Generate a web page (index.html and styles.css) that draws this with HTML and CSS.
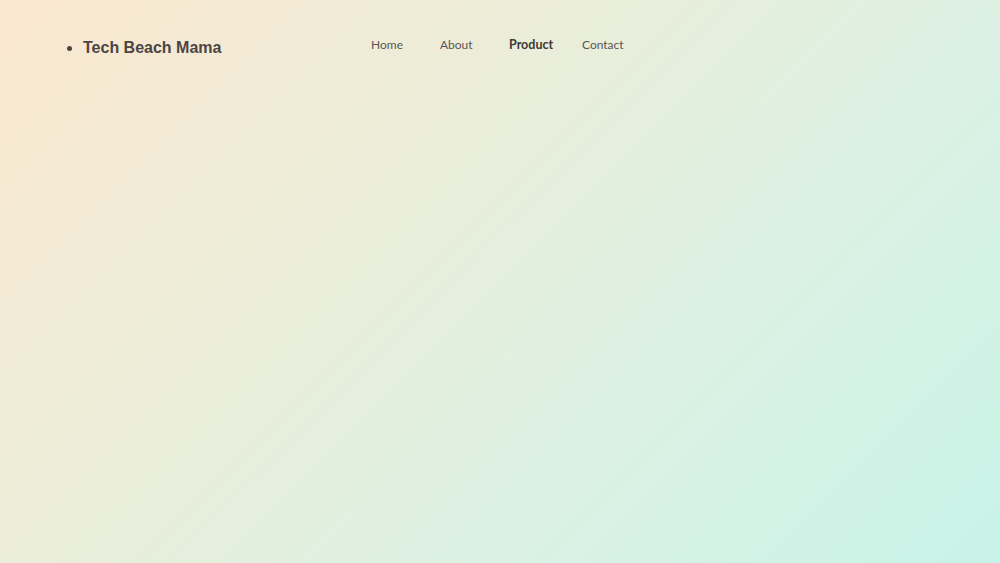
FILE: index.html
```html
<!DOCTYPE html>
<html lang="en">
<head>
    <meta charset="UTF-8">
    <meta name="viewport" content="width=device-width, initial-scale=1.0">
    <title>Tech Beach Mama</title>
    <link rel="stylesheet" href="styles.css">
</head>
<body>
    <header class="header">
        <ul class="brand">
            <li>Tech Beach Mama</li>
        </ul>
        <nav class="nav">
            <a href="#" class="nav-link">Home</a>
            <a href="#" class="nav-link">About</a>
            <a href="#" class="nav-link active">Product</a>
            <a href="#" class="nav-link">Contact</a>
        </nav>
    </header>
</body>
</html>
```
FILE: styles.css
```css
html, body {
    height: 100%;
}
body {
    margin: 0;
    background: linear-gradient(135deg, #fbe7cf 0%, #e9eeda 40%, #dcf1e3 65%, #c8f3e8 100%);
    font-family: Lato, "Open Sans", sans-serif;
    color: #4a4242;
}
.header {
    display: flex;
    align-items: flex-start;
    padding: 36px 0 0 66px;
}
.brand {
    margin: 0;
    padding: 0 0 0 17px;
    width: 288px;
    font-family: "Liberation Sans", Arial, sans-serif;
    font-weight: bold;
    font-size: 16px;
    color: #4d4444;
    line-height: 23px;
}
.nav {
    display: grid;
    grid-template-columns: 69px 69px 73px auto;
    margin-top: 1px;
}
.nav-link {
    font-size: 12px;
    color: #5b5555;
    text-decoration: none;
    line-height: 16px;
}
.nav-link.active {
    font-weight: bold;
    color: #3f3838;
    font-size: 12.5px;
}
```
